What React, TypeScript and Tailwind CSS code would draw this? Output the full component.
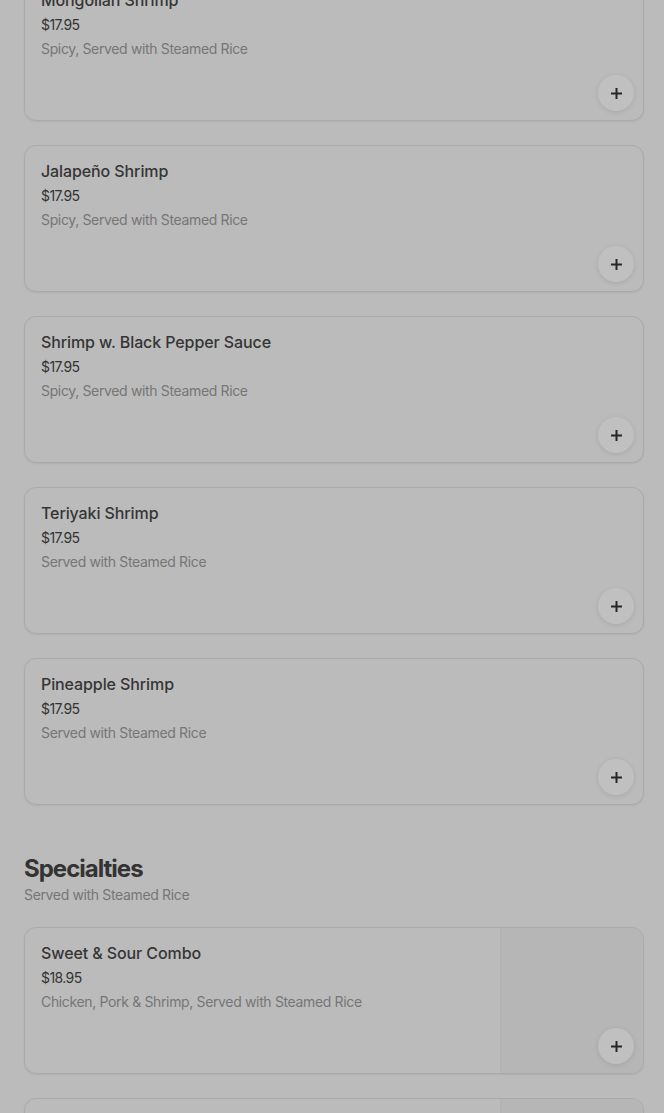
import React from "react";

type Item = { name: string; price: string; desc: string; image?: boolean };

const shrimp: Item[] = [
  { name: "Mongolian Shrimp", price: "$17.95", desc: "Spicy, Served with Steamed Rice" },
  { name: "Jalapeño Shrimp", price: "$17.95", desc: "Spicy, Served with Steamed Rice" },
  { name: "Shrimp w. Black Pepper Sauce", price: "$17.95", desc: "Spicy, Served with Steamed Rice" },
  { name: "Teriyaki Shrimp", price: "$17.95", desc: "Served with Steamed Rice" },
  { name: "Pineapple Shrimp", price: "$17.95", desc: "Served with Steamed Rice" },
];

const specialties: Item[] = [
  { name: "Sweet & Sour Combo", price: "$18.95", desc: "Chicken, Pork & Shrimp, Served with Steamed Rice", image: true },
  { name: "Happy Family", price: "$19.95", desc: "Served with Steamed Rice", image: true },
];

function Plus() {
  return (
    <svg width="13" height="13" viewBox="0 0 13 13">
      <path d="M6.5 1v11M1 6.5h11" stroke="#262626" strokeWidth="2" />
    </svg>
  );
}

function Card({ item }: { item: Item }) {
  return (
    <div className="relative h-[147px] rounded-[12px] border border-[#aaaaaa] bg-[#bbbbbb] shadow-[0_1px_2px_rgba(0,0,0,0.06)] flex overflow-hidden">
      <div className="flex-1 pl-[16px] pt-[13px] pr-4">
        <div className="text-[16px] leading-[24px] font-medium text-[#353535] tracking-[-0.1px]">{item.name}</div>
        <div className="mt-[1px] text-[14px] leading-[24px] text-[#333333] tracking-[-0.6px]">{item.price}</div>
        <div className="text-[14px] leading-[24px] text-[#767676] tracking-[-0.35px]">{item.desc}</div>
      </div>
      {item.image && <div className="w-[143px] bg-[#b6b6b6] border-l border-[#b2b2b2]" />}
      <div className="absolute right-[9px] bottom-[9px] w-[36px] h-[36px] rounded-full bg-[#c0c0c0] shadow-[0_1px_5px_rgba(0,0,0,0.1)] flex items-center justify-center">
        <Plus />
      </div>
    </div>
  );
}

export default function App() {
  return (
    <div className="min-h-[1113px] bg-[#bbbbbb] overflow-hidden" style={{ fontFamily: "Inter, 'Noto Sans', sans-serif" }}>
      <div className="pl-[24px] pr-[20px] -mt-[26px]">
        <div className="flex flex-col gap-[24px]">
          {shrimp.map((it) => (
            <Card key={it.name} item={it} />
          ))}
        </div>
        <div className="mt-[48px]">
          <h2 className="text-[24px] leading-[32px] font-bold text-[#333333] tracking-[-1px]">Specialties</h2>
          <div className="text-[14px] leading-[20px] text-[#767676] tracking-[-0.35px]">Served with Steamed Rice</div>
        </div>
        <div className="mt-[22px] flex flex-col gap-[24px]">
          {specialties.map((it) => (
            <Card key={it.name} item={it} />
          ))}
        </div>
      </div>
    </div>
  );
}
